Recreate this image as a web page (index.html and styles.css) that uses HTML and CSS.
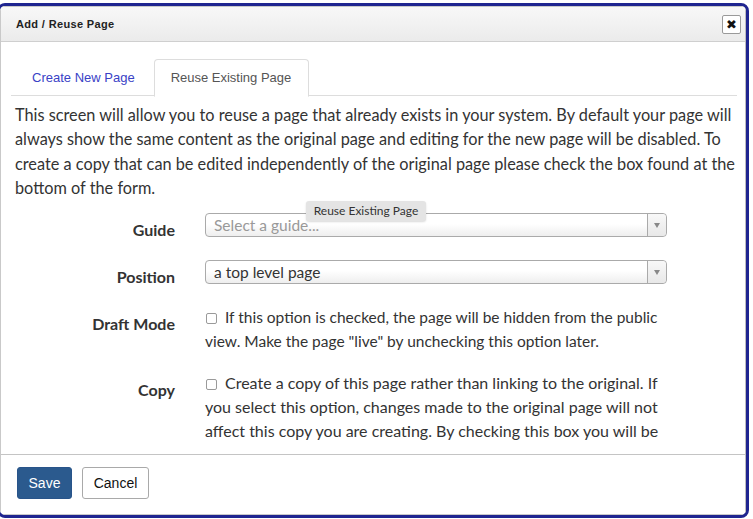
FILE: index.html
```html
<!DOCTYPE html>
<html>
<head>
<meta charset="utf-8">
<link rel="stylesheet" href="styles.css">
</head>
<body>
<div class="page">
  <div class="dialog">
    <div class="inner">
      <div class="header">
        <span class="title">Add / Reuse Page</span>
        <button class="close">&#x2716;</button>
      </div>
      <div class="body">
        <ul class="tabs">
          <li class="tab"><a class="tab-link">Create New Page</a></li>
          <li class="tab active"><a class="tab-link">Reuse Existing Page</a></li>
        </ul>
        <p class="intro">This screen will allow you to reuse a page that already exists in your system. By default your page will always show the same content as the original page and editing for the new page will be disabled. To create a copy that can be edited independently of the original page please check the box found at the bottom of the form.</p>
        <div class="form">
          <div class="row row-guide">
            <label class="label label-select">Guide</label>
            <div class="control">
              <div class="select placeholder"><span class="select-text">Select a guide...</span><span class="arrow"></span></div>
              <div class="tooltip">Reuse Existing Page</div>
            </div>
          </div>
          <div class="row row-position">
            <label class="label label-select">Position</label>
            <div class="control">
              <div class="select"><span class="select-text">a top level page</span><span class="arrow"></span></div>
            </div>
          </div>
          <div class="row row-draft">
            <label class="label label-check">Draft Mode</label>
            <div class="control check-text check-draft"><span class="box"></span>If this option is checked, the page will be hidden from the public view. Make the page "live" by unchecking this option later.</div>
          </div>
          <div class="row row-copy">
            <label class="label label-check">Copy</label>
            <div class="control check-text"><span class="box"></span>Create a copy of this page rather than linking to the original. If you select this option, changes made to the original page will not affect this copy you are creating. By checking this box you will be</div>
          </div>
        </div>
      </div>
      <div class="footer">
        <button class="btn btn-primary">Save</button>
        <button class="btn btn-default">Cancel</button>
      </div>
    </div>
  </div>
</div>
</body>
</html>
```

FILE: styles.css
```css
* { box-sizing: border-box; }
html, body { margin: 0; padding: 0; background: #fff; overflow: hidden; }
.page { width: 753px; height: 519px; padding-top: 3px; overflow: hidden; }
.dialog {
  margin-left: -3px;
  width: 752px;
  height: 515px;
  border: 3px solid #1f2590;
  border-radius: 8px;
  background: #fff;
  overflow: hidden;
}
.inner {
  height: 100%;
  border: 1px solid #c9c9c9;
  border-right-color: #bdbdbd;
  display: flex;
  flex-direction: column;
}
.header {
  height: 35px;
  flex: none;
  display: flex;
  align-items: center;
  justify-content: space-between;
  padding: 0 4px 0 15px;
  background: linear-gradient(#f8f8f8, #ebebeb);
  border-bottom: 1px solid #cfcfcf;
}
.title {
  font-family: "Liberation Sans", Arial, sans-serif;
  font-weight: bold;
  font-size: 11px;
  color: #222;
  letter-spacing: 0.35px;
}
.close {
  width: 19px;
  height: 19px;
  padding: 0;
  border: 1px solid #9a9a9a;
  border-radius: 2px;
  background: #fff;
  font-size: 13px;
  line-height: 17px;
  color: #111;
  font-family: "DejaVu Sans", sans-serif;
  margin-top: 1px;
}
.body {
  flex: 1;
  overflow: hidden;
  padding: 17px 8px 0 14px;
  font-family: Lato, "Open Sans", sans-serif;
  color: #333;
}
.tabs {
  list-style: none;
  margin: 0 0 0 -4px;
  padding: 0 0 0 5px;
  width: 726px;
  display: flex;
  border-bottom: 1px solid #ddd;
  height: 37px;
}
.tab { margin-right: 3px; }
.tab-link {
  display: block;
  height: 37px;
  padding: 10px 15px 0 15px;
  font-family: "Liberation Sans", Arial, sans-serif;
  font-size: 13px;
  line-height: 16px;
  color: #3a42c6;
  border: 1px solid transparent;
  border-radius: 4px 4px 0 0;
}
.tab.active .tab-link {
  color: #555;
  background: #fff;
  border-color: #ddd;
  border-bottom-color: #fff;
  height: 38px;
  padding-left: 16px;
  padding-right: 17px;
}
.intro {
  margin: 7px 0 0 0;
  font-size: 16.3px;
  line-height: 24.3px;
  width: 726px;
}
.form { margin-top: 13px; }
.row {
  display: grid;
  grid-template-columns: 160px 462px;
  column-gap: 30px;
  align-items: start;
}
.row-position { margin-top: 23px; }
.row-draft { margin-top: 21px; }
.row-copy { margin-top: 17px; }
.label {
  text-align: right;
  font-weight: bold;
  font-size: 16px;
  line-height: 24px;
  color: #333;
}
.label-select { padding-top: 5px; margin-bottom: -5px; }
.label-check { padding-top: 7px; }
.control { position: relative; }
.select {
  height: 24px;
  border: 1px solid #aaa;
  border-radius: 4px;
  background: linear-gradient(#fff 45%, #eee);
  display: flex;
  align-items: center;
  font-size: 15.5px;
  color: #333;
  position: relative;
}
.select-text { padding-left: 8px; line-height: 22px; }
.placeholder .select-text { color: #999; }
.arrow {
  position: absolute;
  right: 0;
  top: 0;
  width: 19px;
  height: 22px;
  border-left: 1px solid #aaa;
  background: linear-gradient(#f8f8f8, #e8e8e8);
  border-radius: 0 4px 4px 0;
}
.arrow::after {
  content: "";
  position: absolute;
  left: 6px;
  top: 9px;
  border-left: 3.5px solid transparent;
  border-right: 3.5px solid transparent;
  border-top: 5px solid #888;
}
.tooltip {
  position: absolute;
  left: 101px;
  top: -12px;
  width: 120px;
  height: 20px;
  background: #e4e4e4;
  border-radius: 3px;
  box-shadow: 0 1px 2px rgba(0,0,0,0.15);
  font-size: 12px;
  line-height: 20px;
  text-align: center;
  color: #333;
}
.check-text {
  font-size: 16px;
  line-height: 24.3px;
  color: #333;
}
.check-draft { font-size: 15.5px; }
.box {
  display: inline-block;
  width: 11px;
  height: 11px;
  border: 1px solid #9a9a9a;
  border-radius: 2px;
  background: #fff;
  margin: 0 8px 0 1px;
  vertical-align: -1px;
}
.footer {
  height: 60px;
  flex: none;
  border-top: 1px solid #c4c4c4;
  padding: 12px 0 0 16px;
  display: flex;
  align-items: flex-start;
  gap: 10px;
}
.btn {
  height: 32px;
  font-family: "Liberation Sans", Arial, sans-serif;
  font-size: 14px;
  border-radius: 3px;
  padding: 0 10px;
}
.btn-primary {
  width: 55px;
  background: #2b5a8e;
  border: 1px solid #28548a;
  color: #fff;
}
.btn-default {
  width: 67px;
  background: #fff;
  border: 1px solid #a9a9a9;
  color: #111;
}
```
